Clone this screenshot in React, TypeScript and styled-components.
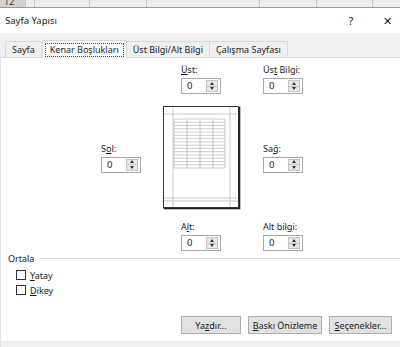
import React from "react";
import styled, { createGlobalStyle } from "styled-components";

const GlobalStyle = createGlobalStyle`
  html, body { margin: 0; padding: 0; background: #ffffff; }
  body { font-family: "Noto Sans", "Open Sans", sans-serif; font-size: 9px; color: #1a1a1a; }
`;

const Frame = styled.div`
  width: 400px;
  height: 347px;
  overflow: hidden;
  display: flex;
  flex-direction: column;
  background: #ffffff;
`;

const ExcelStrip = styled.div`
  height: 7px;
  display: flex;
  background: #eaeaea;
  border-bottom: 1px solid #9a9a9a;
`;

const ExcelCell = styled.div<{ $w: number; $dark?: boolean }>`
  width: ${(p) => p.$w}px;
  flex: none;
  border-right: 1px solid #c6c6c6;
  background: ${(p) => (p.$dark ? "#d2d2d2" : "#ececec")};
  font-size: 9px;
  line-height: 4px;
  color: #333;
  padding-left: 4px;
  box-sizing: border-box;
  overflow: hidden;
`;

const TitleBar = styled.div`
  height: 25px;
  display: flex;
  align-items: center;
  padding: 0 6px 0 5px;
  background: #ffffff;
`;

const Title = styled.div`
  flex: 1;
  font-size: 9.5px;
`;

const TitleButton = styled.div<{ $w: number }>`
  width: ${(p) => p.$w}px;
  text-align: center;
  font-size: 11px;
  color: #222;
`;

const TabStrip = styled.div`
  height: 24px;
  background: #f0f0f0;
  display: flex;
  align-items: flex-end;
  padding-left: 5px;
  border-bottom: 1px solid #d9d9d9;
`;

const Tab = styled.div<{ $active?: boolean }>`
  height: ${(p) => (p.$active ? 18 : 16)}px;
  padding: 0 ${(p) => (p.$active ? 2 : 6)}px;
  display: flex;
  align-items: center;
  box-sizing: border-box;
  border: 1px solid #d9d9d9;
  border-bottom: none;
  border-left: ${(p) => (p.$active ? "1px solid #d9d9d9" : "none")};
  background: ${(p) => (p.$active ? "#ffffff" : "#f0f0f0")};
  margin-bottom: ${(p) => (p.$active ? -1 : 0)}px;
  font-size: 9px;
  &:first-child { border-left: 1px solid #d9d9d9; }
`;

const FocusLabel = styled.span`
  border: 1px dotted #444;
  padding: 0 4px;
  line-height: 12px;
`;

const Panel = styled.div`
  flex: 1;
  display: flex;
  flex-direction: column;
  background: #ffffff;
  border-left: 1px solid #e3e3e3;
`;

const MarginGrid = styled.div`
  display: grid;
  grid-template-columns: 40px 22px 76px 24px 40px;
  grid-template-rows: 30px 103px 30px;
  row-gap: 12px;
  margin: 6px 0 0 100px;
`;

const Field = styled.div<{ $center?: boolean }>`
  display: flex;
  flex-direction: column;
  gap: 3px;
  align-self: ${(p) => (p.$center ? "center" : "start")};
  justify-self: start;
`;

const MidField = styled(Field)`
  justify-self: center;
`;

const Label = styled.div`
  font-size: 9px;
  line-height: 11px;
  height: 11px;
  white-space: nowrap;
`;

const U = styled.span`
  text-decoration: underline;
  text-underline-offset: 1px;
`;

const Spin = styled.div`
  width: 40px;
  height: 16px;
  box-sizing: border-box;
  border: 1px solid #a8a8a8;
  display: flex;
  background: #fff;
`;

const SpinValue = styled.div`
  flex: 1;
  font-size: 9.5px;
  line-height: 14px;
  padding-left: 5px;
`;

const SpinButtons = styled.div`
  width: 12px;
  margin: 1px 2px 1px 0;
  display: flex;
  flex-direction: column;
  border: 1px solid #c4c4c4;
  background: #e8e8e8;
  box-sizing: border-box;
`;

const SpinHalf = styled.div<{ $down?: boolean }>`
  flex: 1;
  display: flex;
  align-items: center;
  justify-content: center;
  border-top: ${(p) => (p.$down ? "1px solid #c4c4c4" : "none")};
  &::after {
    content: "";
    border-left: 2.5px solid transparent;
    border-right: 2.5px solid transparent;
    ${(p) => (p.$down ? "border-top: 3px solid #333;" : "border-bottom: 3px solid #333;")}
  }
`;

const PreviewCell = styled.div`
  grid-column: 3;
  grid-row: 2;
`;

const GroupHeader = styled.div`
  display: flex;
  align-items: center;
  gap: 5px;
  margin: 1px 0 0 7px;
  height: 12px;
  font-size: 9px;
  &::after {
    content: "";
    flex: 1;
    height: 1px;
    background: #dcdcdc;
  }
`;

const CheckList = styled.div`
  display: flex;
  flex-direction: column;
  gap: 5px;
  margin: 6px 0 0 15px;
`;

const CheckRow = styled.div`
  display: flex;
  align-items: center;
  gap: 4px;
  font-size: 9px;
  height: 10px;
`;

const Box = styled.div`
  width: 10px;
  height: 10px;
  box-sizing: border-box;
  border: 1px solid #333;
  background: #fff;
`;

const ButtonRow = styled.div`
  display: flex;
  justify-content: flex-end;
  gap: 7px;
  margin-top: auto;
  padding: 0 8px 7px 0;
`;

const Button = styled.div<{ $w: number }>`
  width: ${(p) => p.$w}px;
  height: 18px;
  box-sizing: border-box;
  border: 1px solid #adadad;
  background: #e1e1e1;
  display: flex;
  align-items: center;
  justify-content: center;
  font-size: 9px;
`;

const BottomBand = styled.div`
  height: 5px;
  background: #f0f0f0;
  border-top: 1px solid #e6e6e6;
`;

const SpinBox = () => (
  <Spin>
    <SpinValue>0</SpinValue>
    <SpinButtons>
      <SpinHalf />
      <SpinHalf $down />
    </SpinButtons>
  </Spin>
);

const PagePreview = () => {
  const rows = 15;
  const top = 13;
  const bottom = 62;
  const lines: React.ReactNode[] = [];
  for (let i = 0; i <= rows; i++) {
    const y = top + ((bottom - top) * i) / rows;
    lines.push(<line key={"r" + i} x1={11} x2={62} y1={y} y2={y} stroke="#b8b8b8" strokeWidth={0.7} />);
  }
  [11, 24, 37, 50, 62].forEach((x, i) =>
    lines.push(<line key={"c" + i} x1={x} x2={x} y1={top} y2={bottom} stroke="#b8b8b8" strokeWidth={0.8} />)
  );
  return (
    <svg width="78" height="104" viewBox="0 0 78 104">
      <rect x="1.5" y="1.5" width="75" height="101" fill="#ffffff" stroke="#222" strokeWidth="1.6" />
      <rect x="0.5" y="0.5" width="75" height="101" fill="#ffffff" stroke="#333" strokeWidth="1" />
      <line x1="10" x2="10" y1="1" y2="101" stroke="#c8c8c8" strokeWidth="1" />
      <line x1="67" x2="67" y1="1" y2="101" stroke="#c8c8c8" strokeWidth="1" />
      <line x1="1" x2="75" y1="8" y2="8" stroke="#c8c8c8" strokeWidth="1" />
      <line x1="1" x2="75" y1="92" y2="92" stroke="#c8c8c8" strokeWidth="1" />
      <line x1="1" x2="75" y1="95" y2="95" stroke="#c8c8c8" strokeWidth="1" />
      {lines}
    </svg>
  );
};

export default function App() {
  return (
    <>
      <GlobalStyle />
      <Frame>
        <ExcelStrip>
          <ExcelCell $w={26} $dark>12</ExcelCell>
          <ExcelCell $w={9} />
          <ExcelCell $w={55} />
          <ExcelCell $w={57} />
          <ExcelCell $w={113} />
          <ExcelCell $w={57} />
          <ExcelCell $w={56} />
          <ExcelCell $w={40} />
        </ExcelStrip>
        <TitleBar>
          <Title>Sayfa Yapısı</Title>
          <TitleButton $w={14}>?</TitleButton>
          <TitleButton $w={22} />
          <TitleButton $w={14}>✕</TitleButton>
        </TitleBar>
        <TabStrip>
          <Tab>Sayfa</Tab>
          <Tab $active>
            <FocusLabel>Kenar Boşlukları</FocusLabel>
          </Tab>
          <Tab>Üst Bilgi/Alt Bilgi</Tab>
          <Tab>Çalışma Sayfası</Tab>
        </TabStrip>
        <Panel>
          <MarginGrid>
            <MidField style={{ gridColumn: 3, gridRow: 1 }}>
              <Label>
                <U>Ü</U>st:
              </Label>
              <SpinBox />
            </MidField>
            <Field style={{ gridColumn: 5, gridRow: 1 }}>
              <Label>
                Üs<U>t</U> Bilgi:
              </Label>
              <SpinBox />
            </Field>
            <Field $center style={{ gridColumn: 1, gridRow: 2 }}>
              <Label>
                S<U>o</U>l:
              </Label>
              <SpinBox />
            </Field>
            <PreviewCell>
              <PagePreview />
            </PreviewCell>
            <Field $center style={{ gridColumn: 5, gridRow: 2 }}>
              <Label>
                Sa<U>ğ</U>:
              </Label>
              <SpinBox />
            </Field>
            <MidField style={{ gridColumn: 3, gridRow: 3 }}>
              <Label>
                A<U>l</U>t:
              </Label>
              <SpinBox />
            </MidField>
            <Field style={{ gridColumn: 5, gridRow: 3 }}>
              <Label>
                Alt bil<U>g</U>i:
              </Label>
              <SpinBox />
            </Field>
          </MarginGrid>
          <GroupHeader>Ortala</GroupHeader>
          <CheckList>
            <CheckRow>
              <Box />
              <span>
                <U>Y</U>atay
              </span>
            </CheckRow>
            <CheckRow>
              <Box />
              <span>
                <U>D</U>ikey
              </span>
            </CheckRow>
          </CheckList>
          <ButtonRow>
            <Button $w={60}>
              <span>
                Ya<U>z</U>dır...
              </span>
            </Button>
            <Button $w={74}>
              <span>
                <U>B</U>askı Önizleme
              </span>
            </Button>
            <Button $w={63}>
              <span>
                <U>S</U>eçenekler...
              </span>
            </Button>
          </ButtonRow>
          <BottomBand />
        </Panel>
      </Frame>
    </>
  );
}
